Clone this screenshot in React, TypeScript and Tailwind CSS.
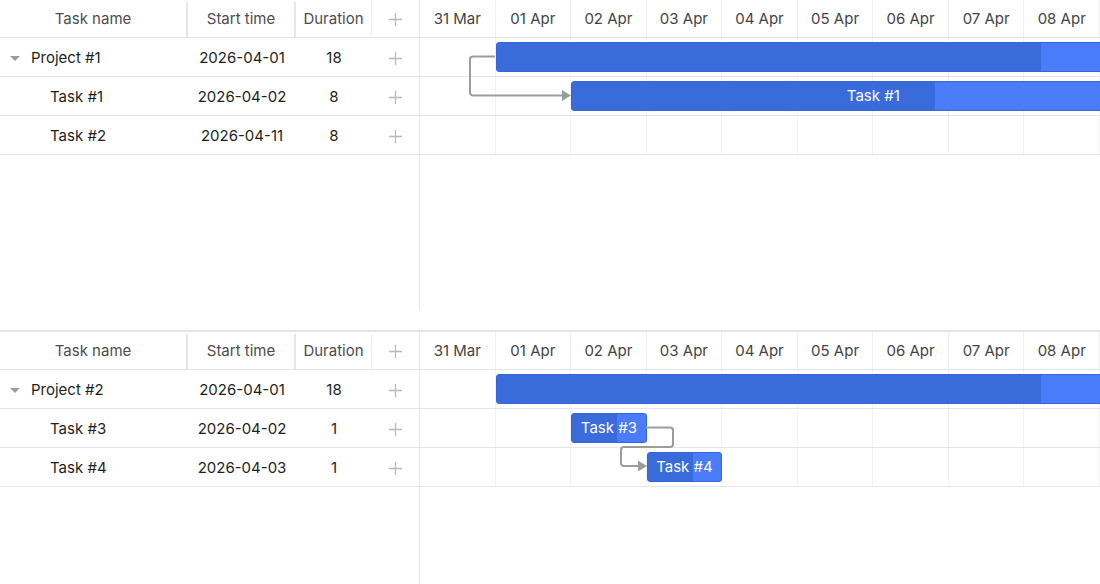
import React from "react";

const DAY = 680 / 9;
const days = ["31 Mar", "01 Apr", "02 Apr", "03 Apr", "04 Apr", "05 Apr", "06 Apr", "07 Apr", "08 Apr"];

type Row = {
  name: string;
  start: string;
  duration: number;
  offset: number;
  progress: number;
  project?: boolean;
};

const PlusIcon = () => (
  <svg width="15" height="15" viewBox="0 0 15 15" className="text-[#b9b9b9]">
    <path d="M7.5 1v13M1 7.5h13" stroke="currentColor" strokeWidth="1.3" fill="none" />
  </svg>
);

const Bar = ({ row }: { row: Row }) => {
  // bars past the last visible day are not drawn
  if (row.offset >= days.length) return null;
  const width = row.duration * DAY;
  return (
    <div
      className="absolute top-[4px] h-[30px] rounded-[3px] border border-[#3566d8] bg-[#4a7cf9] overflow-hidden"
      style={{ left: row.offset * DAY, width }}
    >
      <div className="absolute inset-y-0 left-0 bg-[#3a6bda]" style={{ width: width * row.progress }} />
      {!row.project && (
        <div className="relative h-full flex items-center justify-center pt-[1px] text-white text-[15px] whitespace-nowrap">
          {row.name}
        </div>
      )}
    </div>
  );
};

const Gantt = ({ rows, links, className }: { rows: Row[]; links: React.ReactNode; className?: string }) => (
  <div className={"flex h-[310px] shrink-0 " + (className || "")}>
    {/* grid */}
    <div className="w-[420px] border-r border-[#e6e6e6] shrink-0">
      <div className="flex h-[38px] border-b border-[#e4e4e4] text-[#4d4d4d] text-[15px] pt-[2px]">
        <div className="w-[188px] border-r-2 border-[#e6e6e6] flex items-center justify-center">Task name</div>
        <div className="w-[108px] border-r-2 border-[#e6e6e6] flex items-center justify-center">Start time</div>
        <div className="w-[76px] border-r border-[#efefef] flex items-center justify-center">Duration</div>
        <div className="flex-1 flex items-center justify-center">
          <PlusIcon />
        </div>
      </div>
      {rows.map((r) => (
        <div key={r.name} className="flex h-[39px] border-b border-[#e6e6e6] text-[15px] text-[#1e1e1e] pt-[3px]">
          <div className="w-[188px] flex items-center">
            {r.project ? (
              <>
                <svg width="10" height="6" viewBox="0 0 10 6" className="ml-[10px] mr-[11px]">
                  <path d="M0 0h10L5 5z" fill="#9d9d9d" />
                </svg>
                {r.name}
              </>
            ) : (
              <span className="pl-[50px]">{r.name}</span>
            )}
          </div>
          <div className="w-[108px] flex items-center justify-center">{r.start}</div>
          <div className="w-[76px] flex items-center justify-center">{r.duration}</div>
          <div className="flex-1 flex items-center justify-center">
            <PlusIcon />
          </div>
        </div>
      ))}
    </div>
    {/* timeline */}
    <div className="flex-1 overflow-hidden">
      <div className="grid grid-cols-9 w-[680px] h-[38px] border-b border-[#e4e4e4] text-[15px] text-[#444]">
        {days.map((d) => (
          <div key={d} className="flex items-center justify-center pt-[2px] border-r border-[#efefef]">
            {d}
          </div>
        ))}
      </div>
      <div className="relative w-[680px]">
        {rows.map((r) => (
          <div key={r.name} className="relative h-[39px] border-b border-[#e6e6e6]">
            <div className="grid grid-cols-9 h-full">
              {days.map((d) => (
                <div key={d} className="border-r border-[#f2f2f2]" />
              ))}
            </div>
            <Bar row={r} />
          </div>
        ))}
        <svg className="absolute inset-0 pointer-events-none" width="680" height="117" fill="none">
          {links}
        </svg>
      </div>
    </div>
  </div>
);

const arrow = (x: number, y: number) => <path d={`M${x - 9} ${y - 5.5}L${x} ${y}L${x - 9} ${y + 5.5}z`} fill="#9c9c9c" />;

export default function App() {
  const rows1: Row[] = [
    { name: "Project #1", start: "2026-04-01", duration: 18, offset: 1, progress: 0.4, project: true },
    { name: "Task #1", start: "2026-04-02", duration: 8, offset: 2, progress: 0.6 },
    { name: "Task #2", start: "2026-04-11", duration: 8, offset: 11, progress: 0.6 },
  ];
  const rows2: Row[] = [
    { name: "Project #2", start: "2026-04-01", duration: 18, offset: 1, progress: 0.4, project: true },
    { name: "Task #3", start: "2026-04-02", duration: 1, offset: 2, progress: 0.6 },
    { name: "Task #4", start: "2026-04-03", duration: 1, offset: 3, progress: 0.6 },
  ];

  const links1 = (
    <>
      <path d="M75 18.5H53a3 3 0 0 0-3 3V54.5a3 3 0 0 0 3 3H143" stroke="#9c9c9c" strokeWidth="2" />
      {arrow(151, 57.5)}
    </>
  );
  const links2 = (
    <>
      <path
        d="M226 57.5H250a3 3 0 0 1 3 3V74a3 3 0 0 1-3 3H204a3 3 0 0 0-3 3V93a3 3 0 0 0 3 3H219"
        stroke="#9c9c9c"
        strokeWidth="2"
      />
      {arrow(227, 96)}
    </>
  );

  return (
    <div className="w-[1100px] h-[584px] overflow-hidden bg-white flex flex-col" style={{ fontFamily: "Inter, 'Noto Sans', sans-serif" }}>
      <Gantt rows={rows1} links={links1} />
      <div className="h-[20px] shrink-0" />
      <Gantt rows={rows2} links={links2} className="border-t-2 border-[#e4e4e4]" />
    </div>
  );
}
